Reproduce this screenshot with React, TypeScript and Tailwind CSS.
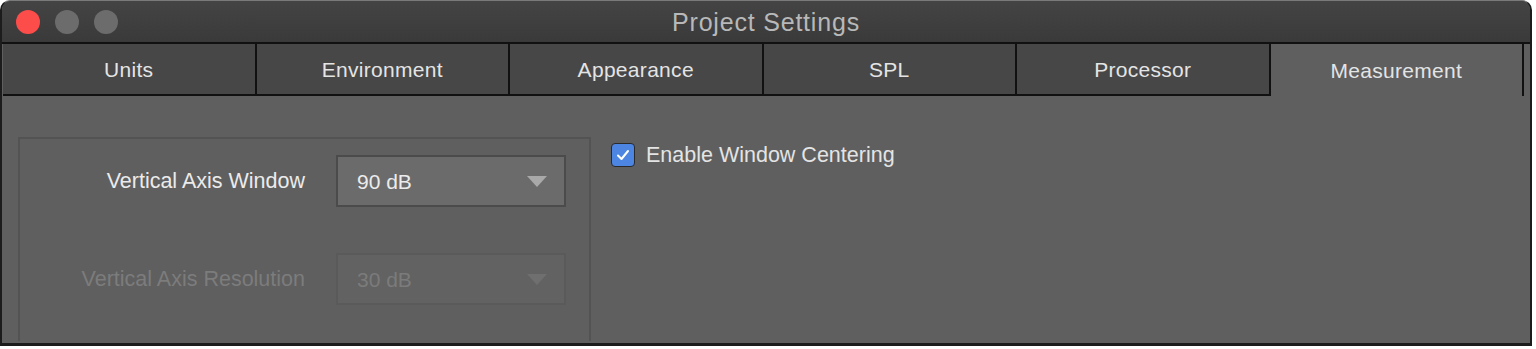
import React from "react";

const tabs = ["Units", "Environment", "Appearance", "SPL", "Processor", "Measurement"];

function Select({ value, disabled }: { value: string; disabled?: boolean }) {
  return (
    <div
      className={
        "w-[230px] h-[52px] flex items-center justify-between pl-[19px] pr-[17px] border-2 " +
        (disabled
          ? "bg-[#626262] border-[#5a5a5a] text-[#7b7b7b]"
          : "bg-[#6b6b6b] border-[#4b4b4b] text-[#ececec]")
      }
    >
      <span className="text-[21px] leading-none">{value}</span>
      <svg width="20" height="11" viewBox="0 0 20 11">
        <polygon points="0,0 20,0 10,11" fill={disabled ? "#6f6f6f" : "#a9a9a9"} />
      </svg>
    </div>
  );
}

export default function App() {
  return (
    <div
      className="w-[1536px] h-[349px] bg-white"
      style={{ fontFamily: '"Liberation Sans", Arial, sans-serif' }}
    >
      <div className="w-[1532px] h-[346px] rounded-t-[10px] overflow-hidden border-x-2 border-b-[3px] border-t border-x-[#1c1c1c] border-b-[#1c1c1c] border-t-[#7a7a7a] flex flex-col bg-[#5f5f5f]">
        {/* title bar */}
        <div className="h-[43px] shrink-0 relative flex items-center justify-center bg-gradient-to-b from-[#444444] to-[#3a3a3a] border-b-2 border-[#111]">
          <div className="absolute left-[14px] top-[9px] flex gap-[15px]">
            <div className="w-[24px] h-[24px] rounded-full bg-[#fc4d4a]" />
            <div className="w-[24px] h-[24px] rounded-full bg-[#6c6c6c]" />
            <div className="w-[24px] h-[24px] rounded-full bg-[#6c6c6c]" />
          </div>
          <span className="text-[25px] tracking-[0.8px] text-[#b8b8b8] mt-[3px]">Project Settings</span>
        </div>
        {/* tabs */}
        <div className="h-[52px] shrink-0 flex pl-[1px] pr-[6px]">
          {tabs.map((t, i) => {
            const active = i === tabs.length - 1;
            return (
              <div
                key={t}
                className={
                  "flex-1 flex items-center justify-center pt-[2px] border-r-2 border-[#111] text-[21px] text-[#e4e4e4] tracking-[0.3px] " +
                  (active ? "bg-[#5f5f5f]" : "bg-[#474747] border-b-2")
                }
              >
                {t}
              </div>
            );
          })}
        </div>
        {/* content */}
        <div className="flex-1 flex pl-[16px] pt-[41px] gap-[20px]">
          <div className="w-[573px] h-[204px] border-2 border-b-0 border-[#535353] flex flex-col pt-[16px]">
            <div className="flex items-center">
              <div className="w-[285px] text-right text-[21.5px] text-[#ebebeb]">Vertical Axis Window</div>
              <div className="ml-[31px]">
                <Select value="90 dB" />
              </div>
            </div>
            <div className="flex items-center mt-[46px]">
              <div className="w-[285px] text-right text-[21.5px] text-[#7c7c7c]">Vertical Axis Resolution</div>
              <div className="ml-[31px]">
                <Select value="30 dB" disabled />
              </div>
            </div>
          </div>
          <div className="flex items-center h-[24px] mt-[6px] gap-[11px]">
            <div className="w-[24px] h-[24px] rounded-[4px] bg-[#4c86e2] border border-[#2a2a2a] flex items-center justify-center">
              <svg width="14" height="12" viewBox="0 0 14 12">
                <path d="M2 6.5 L5.5 10 L12 2" stroke="white" strokeWidth="2" fill="none" strokeLinecap="round" strokeLinejoin="round" />
              </svg>
            </div>
            <span className="text-[21.5px] text-[#e4e4e4]">Enable Window Centering</span>
          </div>
        </div>
      </div>
    </div>
  );
}
